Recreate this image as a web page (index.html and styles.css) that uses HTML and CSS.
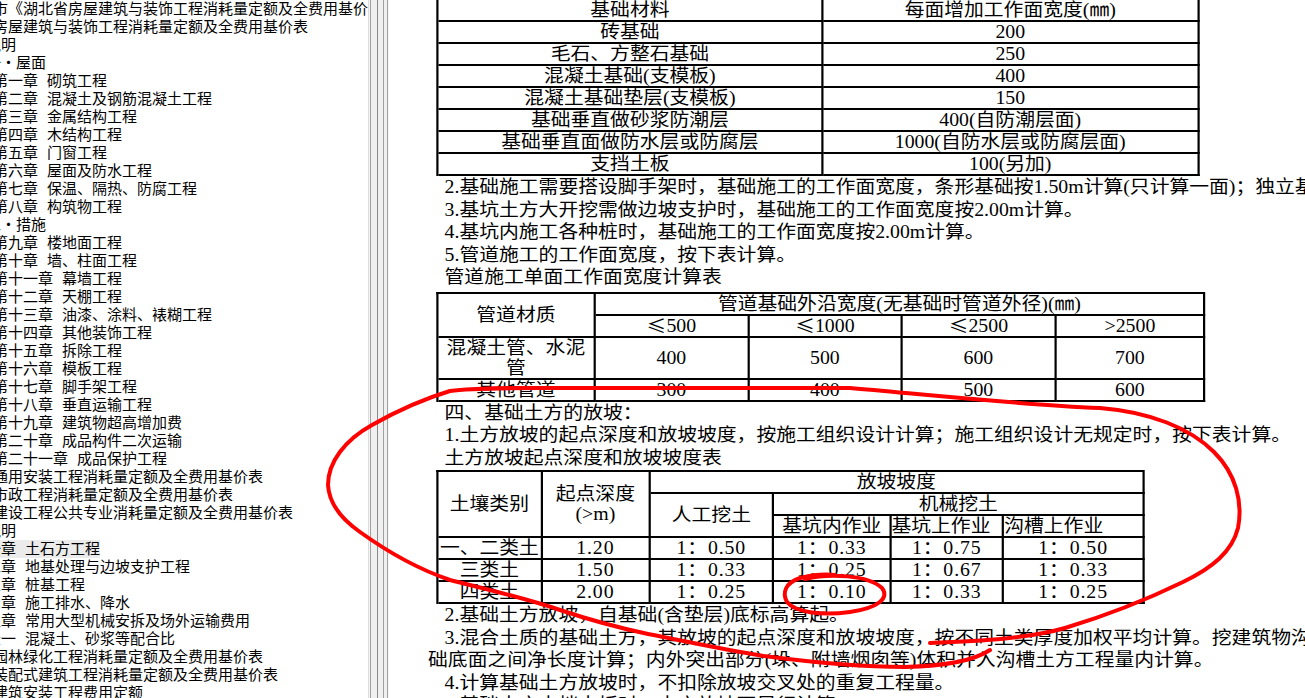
FILE: index.html
```html
<!DOCTYPE html>
<html lang="zh-CN">
<head>
<meta charset="utf-8">
<title>湖北省房屋建筑与装饰工程消耗量定额及全费用基价表</title>
<link rel="stylesheet" href="styles.css">
</head>
<body>
<div class="app">
  <nav class="tree">
    <div class="row a">市《湖北省房屋建筑与装饰工程消耗量定额及全费用基价表》</div>
    <div class="row a">房屋建筑与装饰工程消耗量定额及全费用基价表</div>
    <div class="row b">说明</div>
    <div class="row b">一・屋面</div>
    <div class="row a">第一章 砌筑工程</div>
    <div class="row a">第二章 混凝土及钢筋混凝土工程</div>
    <div class="row a">第三章 金属结构工程</div>
    <div class="row a">第四章 木结构工程</div>
    <div class="row a">第五章 门窗工程</div>
    <div class="row a">第六章 屋面及防水工程</div>
    <div class="row a">第七章 保温、隔热、防腐工程</div>
    <div class="row a">第八章 构筑物工程</div>
    <div class="row b">二・措施</div>
    <div class="row a">第九章 楼地面工程</div>
    <div class="row a">第十章 墙、柱面工程</div>
    <div class="row a">第十一章 幕墙工程</div>
    <div class="row a">第十二章 天棚工程</div>
    <div class="row a">第十三章 油漆、涂料、裱糊工程</div>
    <div class="row a">第十四章 其他装饰工程</div>
    <div class="row a">第十五章 拆除工程</div>
    <div class="row a">第十六章 模板工程</div>
    <div class="row a">第十七章 脚手架工程</div>
    <div class="row a">第十八章 垂直运输工程</div>
    <div class="row a">第十九章 建筑物超高增加费</div>
    <div class="row a">第二十章 成品构件二次运输</div>
    <div class="row a">第二十一章 成品保护工程</div>
    <div class="row a">通用安装工程消耗量定额及全费用基价表</div>
    <div class="row a">市政工程消耗量定额及全费用基价表</div>
    <div class="row a">建设工程公共专业消耗量定额及全费用基价表</div>
    <div class="row b">说明</div>
    <div class="row c"><span class="sel">第一章 土石方工程</span></div>
    <div class="row c">第二章 地基处理与边坡支护工程</div>
    <div class="row c">第三章 桩基工程</div>
    <div class="row c">第四章 施工排水、降水</div>
    <div class="row c">第五章 常用大型机械安拆及场外运输费用</div>
    <div class="row c">附录一 混凝土、砂浆等配合比</div>
    <div class="row a">园林绿化工程消耗量定额及全费用基价表</div>
    <div class="row a">装配式建筑工程消耗量定额及全费用基价表</div>
    <div class="row a">建筑安装工程费用定额</div>
  </nav>

  <div class="splitter"></div>

  <main class="doc">
    <div class="page">
      <table class="t t1">
        <colgroup><col class="t1a"><col class="t1b"></colgroup>
        <tr><td>基础材料</td><td>每面增加工作面宽度(㎜)</td></tr>
        <tr><td>砖基础</td><td>200</td></tr>
        <tr><td>毛石、方整石基础</td><td>250</td></tr>
        <tr><td>混凝土基础(支模板)</td><td>400</td></tr>
        <tr><td>混凝土基础垫层(支模板)</td><td>150</td></tr>
        <tr><td>基础垂直做砂浆防潮层</td><td>400(自防潮层面)</td></tr>
        <tr><td>基础垂直面做防水层或防腐层</td><td>1000(自防水层或防腐层面)</td></tr>
        <tr><td>支挡土板</td><td>100(另加)</td></tr>
      </table>

      <p class="para">2.基础施工需要搭设脚手架时，基础施工的工作面宽度，条形基础按1.50m计算(只计算一面)；独立基础按0.45m计算(四面均计算)。</p>
      <p class="para">3.基坑土方大开挖需做边坡支护时，基础施工的工作面宽度按2.00m计算。</p>
      <p class="para">4.基坑内施工各种桩时，基础施工的工作面宽度按2.00m计算。</p>
      <p class="para">5.管道施工的工作面宽度，按下表计算。</p>
      <p class="para">管道施工单面工作面宽度计算表</p>

      <table class="t t2">
        <colgroup><col class="t2a"><col class="t2b"><col class="t2c"><col class="t2d"><col class="t2e"></colgroup>
        <tr><td rowspan="2">管道材质</td><td colspan="4">管道基础外沿宽度(无基础时管道外径)(㎜)</td></tr>
        <tr><td><span class="sym">≤</span>500</td><td><span class="sym">≤</span>1000</td><td><span class="sym">≤</span>2500</td><td>&gt;2500</td></tr>
        <tr><td>混凝土管、水泥管</td><td>400</td><td>500</td><td>600</td><td>700</td></tr>
        <tr><td>其他管道</td><td>300</td><td>400</td><td>500</td><td>600</td></tr>
      </table>

      <p class="para">四、基础土方的放坡：</p>
      <p class="para">1.土方放坡的起点深度和放坡坡度，按施工组织设计计算；施工组织设计无规定时，按下表计算。</p>
      <p class="para">土方放坡起点深度和放坡坡度表</p>

      <table class="t t3">
        <colgroup><col class="t3a"><col class="t3b"><col class="t3c"><col class="t3d"><col class="t3e"><col class="t3f"></colgroup>
        <tr><td rowspan="3">土壤类别</td><td rowspan="3">起点深度<br>(&gt;m)</td><td colspan="4">放坡坡度</td></tr>
        <tr><td rowspan="2">人工挖土</td><td colspan="3">机械挖土</td></tr>
        <tr><td>基坑内作业</td><td class="l">基坑上作业</td><td class="l">沟槽上作业</td></tr>
        <tr><td>一、二类土</td><td class="n">1.20</td><td class="n">1：0.50</td><td class="n">1：0.33</td><td class="n">1：0.75</td><td class="n">1：0.50</td></tr>
        <tr><td>三类土</td><td class="n">1.50</td><td class="n">1：0.33</td><td class="n">1：0.25</td><td class="n">1：0.67</td><td class="n">1：0.33</td></tr>
        <tr><td>四类土</td><td class="n">2.00</td><td class="n">1：0.25</td><td class="n">1：0.10</td><td class="n">1：0.33</td><td class="n">1：0.25</td></tr>
      </table>

      <p class="para">2.基础土方放坡，自基础(含垫层)底标高算起。</p>
      <p class="para">3.混合土质的基础土方，其放坡的起点深度和放坡坡度，按不同土类厚度加权平均计算。挖建筑物沟槽时，外墙按中心线、内墙按基<br><span class="cont">础底面之间净长度计算；内外突出部分(垛、附墙烟囱等)体积并入沟槽土方工程量内计算。</span></p>
      <p class="para">4.计算基础土方放坡时，不扣除放坡交叉处的重复工程量。</p>
      <p class="para">5.基础土方支挡土板时，土方放坡不另行计算。</p>
    </div>
  </main>
</div>

<svg class="marks" width="1305" height="698" viewBox="0 0 1305 698" aria-hidden="true">
  <path d="M 990 650 C 975 660, 945 666, 905 667 C 860 667, 810 662, 764 656 C 720 649, 685 641, 648 634 C 615 627, 590 620, 560 610 C 525 598, 490 590, 450 580 C 415 568, 385 550, 360 532 C 340 518, 329 502, 328 485 C 328 462, 345 440, 372 425 C 395 412, 420 400, 450 391 C 470 388, 500 388, 540 388 L 850 388 C 920 394, 1010 404, 1100 408 C 1150 412, 1190 428, 1214 452 C 1236 474, 1243 502, 1238 528 C 1232 552, 1212 568, 1183 582 C 1150 598, 1115 613, 1065 628 C 1030 638, 985 641, 930 643"/>
  <path d="M 805 579 C 830 573, 868 575, 882 588 C 890 598, 878 608, 850 612 C 820 616, 795 612, 787 602 C 782 593, 785 583, 800 578 C 812 575, 825 574, 835 575"/>
</svg>
</body>
</html>
```

FILE: styles.css
```css
html, body {
  margin: 0;
  padding: 0;
  background: #ffffff;
}

body {
  position: relative;
  width: 1305px;
  height: 698px;
  overflow: hidden;
}

.app {
  display: flex;
  width: 1305px;
  height: 698px;
}

/* ---------- left tree ---------- */
.tree {
  flex: none;
  width: 368px;
  height: 698px;
  overflow: hidden;
  background: #ffffff;
  color: #000000;
  font-family: "Liberation Sans", "Noto Sans CJK SC", sans-serif;
  font-size: 15px;
  line-height: 18px;
  word-spacing: 4.8px;
}

.row {
  height: 18px;
  white-space: nowrap;
}

.row.a { margin-left: -7px; }
.row.b { margin-left: -14px; }
.row.c { margin-left: -29px; }

.sel {
  display: inline-block;
  height: 18px;
  vertical-align: top;
  background: #ebebeb;
}

/* ---------- splitter ---------- */
.splitter {
  flex: none;
  width: 21px;
  height: 698px;
  background: linear-gradient(to right,
    #dcdcdc 0, #dcdcdc 1px,
    #f6f6f6 1px, #f6f6f6 2px,
    #a0a0a0 2px, #a0a0a0 3px,
    #f0f0f0 3px, #f0f0f0 9px,
    #8a8a8a 9px, #8a8a8a 10px,
    #f0f0f0 10px, #f0f0f0 15px,
    #a0a0a0 15px, #a0a0a0 16px,
    #f0f0f0 16px, #f0f0f0 19px,
    #a0a0a0 19px, #a0a0a0 20px,
    #f8f8f8 20px, #f8f8f8 21px);
}

/* ---------- document ---------- */
.doc {
  flex: 1;
  height: 698px;
  overflow: hidden;
  background: #ffffff;
}

.page {
  width: 1000px;
  padding-left: 43px;
  transform: scaleX(1.1);
  transform-origin: 0 0;
  color: #000000;
  font-family: "Liberation Serif", "Noto Sans CJK SC", serif;
  font-size: 18px;
  line-height: 22.5px;
}

.para {
  margin: 0;
  text-indent: 7.5px;
  white-space: nowrap;
}

.t {
  border-collapse: separate;
  border-spacing: 0;
  table-layout: fixed;
  border-top: 2px solid #000000;
  border-left: 2px solid #000000;
}

.t td {
  padding: 0;
  border-right: 2px solid #000000;
  border-bottom: 2px solid #000000;
  text-align: center;
  vertical-align: middle;
  line-height: 20px;
}

.t td.l { text-align: left; }
.t td.n { letter-spacing: 0.8px; }

.sym {
  display: inline-block;
  height: 20px;
  vertical-align: top;
  font-family: "Noto Sans CJK SC", sans-serif;
  font-size: 18px;
  line-height: 18px;
}

.t1 { width: 693.5px; margin-top: -2px; }
.t1a { width: 350px; }
.t1b { width: 341.5px; }

.t2 { width: 699.3px; margin-top: 3px; }
.t2a { width: 142.7px; }
.t2b { width: 140px; }
.t2c { width: 139.1px; }
.t2d { width: 140px; }
.t2e { width: 135.5px; }

.t3 { width: 643.6px; margin-top: 1px; }
.t3a { width: 94.5px; }
.t3b { width: 98.2px; }
.t3c { width: 112.7px; }
.t3d { width: 106.4px; }
.t3e { width: 102.5px; }
.t3f { width: 127.3px; }

.cont {
  display: inline-block;
  text-indent: 0;
  margin-left: -7.5px;
}

/* ---------- red hand-drawn marks ---------- */
.marks {
  position: absolute;
  left: 0;
  top: 0;
  pointer-events: none;
  fill: none;
  stroke: #ff0000;
  stroke-width: 4;
  stroke-linecap: round;
  stroke-linejoin: round;
}
```
